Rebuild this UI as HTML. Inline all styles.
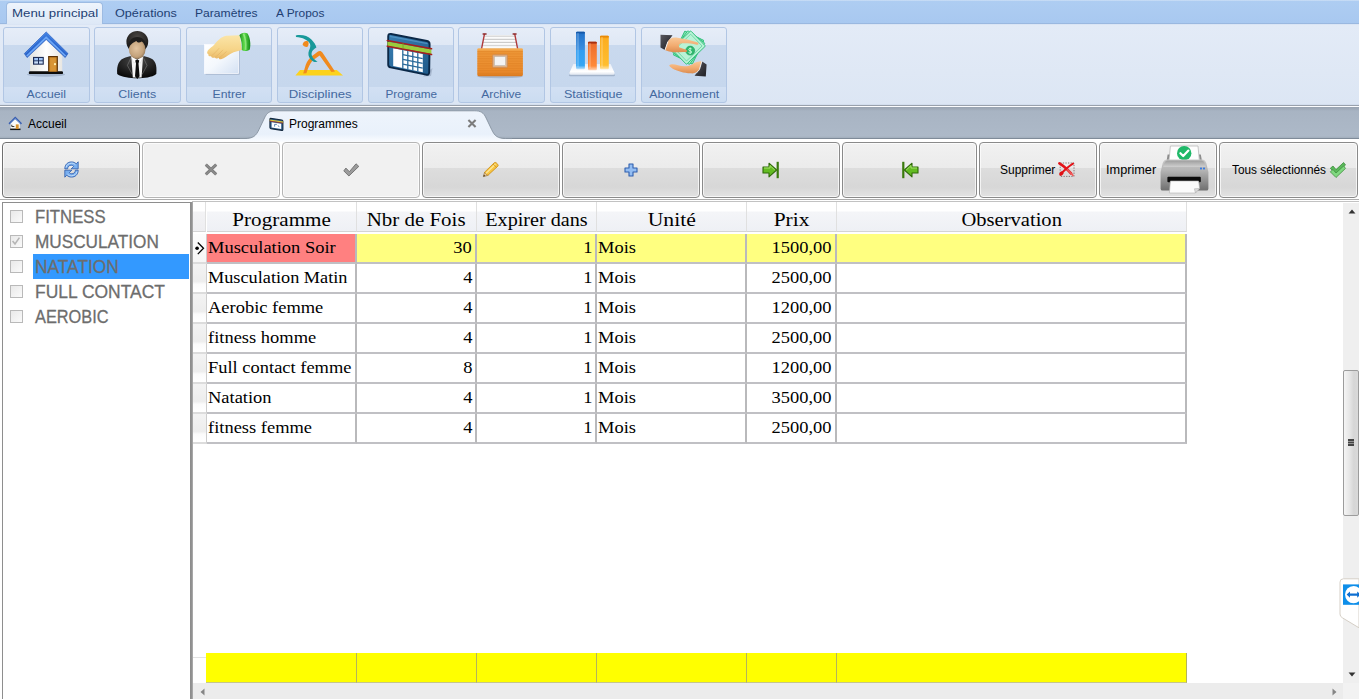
<!DOCTYPE html>
<html lang="fr">
<head>
<meta charset="utf-8">
<title>Programmes</title>
<style>
*{box-sizing:border-box;margin:0;padding:0}
html,body{width:1359px;height:699px;overflow:hidden;background:#fff}
body{position:relative;font-family:"Liberation Sans","DejaVu Sans",sans-serif;font-size:12px;color:#000}
.abs{position:absolute}
/* ---------- ribbon ---------- */
#tabstrip{left:0;top:0;width:1359px;height:24px;background:linear-gradient(#d5e4f7 0,#aecdf2 1.2px,#a8c8f0 100%)}
#ribbon{left:0;top:23px;width:1359px;height:82px;background:linear-gradient(#94b3dc 0,#9dbbe2 .8px,#e3ebf7 1.6px,#dfe8f5 60%,#dce6f4 100%)}
#ribline{left:0;top:104px;width:1359px;height:3px;background:linear-gradient(#d3deee 0,#d3deee .8px,#99a1ac 1px,#99a1ac 1.9px,#fbfcfe 2px)}
.rtab{top:0;height:24px;line-height:26px;font-size:11.2px;color:#1e3f73;white-space:nowrap;transform-origin:0 50%;transform:scaleX(1.13)}
#rtab-active{left:6px;top:2px;width:97px;height:22px;background:linear-gradient(#eef4fc,#dde8f6);border:1px solid #9dbbe2;border-bottom:none;border-radius:4px 4px 0 0}
.rbtn{top:27px;width:86.5px;height:76px;border:1px solid #b1c6e4;border-radius:3px;background:linear-gradient(#e6edf8 0,#dfe8f5 17px,#c9d9ee 17px,#c6d7ed 59px,#d2e0f3 59px,#cbdcf1 100%);overflow:hidden}
.rbtn .lbl{position:absolute;left:0;right:0;bottom:0;height:16px;line-height:17px;text-align:center;font-size:10.6px;color:#44699f;transform:scaleX(1.09)}
.rbtn svg.full{position:absolute;left:-1px;top:-1px;width:87px;height:76px}
/* ---------- doc tab bar ---------- */
#tabbar{left:0;top:107px;width:1359px;height:32px;background:linear-gradient(#98a3b1 0,#9faab8 2px,#a8b4c3 4px,#adb9c8 29px,#a4b0be 30.5px,#7f8b99 31.5px,#fff 32px)}
#tabgap{left:0;top:139px;width:1359px;height:65px;background:#fff}
.dtab{top:108px;height:31px;line-height:33px;font-size:12px;color:#000;white-space:nowrap}
/* ---------- toolbar ---------- */
.tb{top:142px;height:56px;border:1px solid #b5b5b5;border-radius:4px;background:linear-gradient(#f1f1f1 0,#ebebeb 25px,#dddddd 25px,#d7d7d7 44px,#e2e2e2 100%);box-shadow:inset 0 0 0 1px rgba(255,255,255,.7)}
.tb.flat{background:#f1f1f1}
.tb .t{position:absolute;top:0;height:54px;line-height:54px;font-size:12px;white-space:nowrap}
/* ---------- left list ---------- */
#left{left:2px;top:202px;width:191px;height:498px;border:1px solid #8e8e8e;border-right:none;background:#fff}
.li{-webkit-text-stroke:.3px #6d6d6d;left:34.5px;font-family:"Liberation Sans",sans-serif;font-size:19.1px;color:#6d6d6d;height:25px;line-height:25px;white-space:nowrap;transform-origin:0 50%;transform:scaleX(.85)}
.cb{left:10px;width:13px;height:13px;border:1px solid #b9b9b9;background:linear-gradient(135deg,#e9e9e9,#fafafa)}
/* ---------- grid ---------- */
.hd{top:202px;height:30px;line-height:35px;text-align:center;font-family:"Liberation Serif","DejaVu Serif",serif;font-size:18.7px;background:linear-gradient(#fff 0,#fff 9px,#f4f5f8 10px,#eef0f5 100%);border-right:1px solid #e0e0e0;border-bottom:1px solid #d4d4d4;white-space:nowrap}
.c{height:30px;line-height:27px;font-family:"Liberation Serif","DejaVu Serif",serif;font-size:16.8px;border-right:2px solid #b9b9bb;border-bottom:2px solid #c0c0c4;white-space:nowrap;overflow:hidden;padding:0 3px 0 1.4px;background:#fff}
.r{text-align:right}
.y{background:#ffff80}
.ft{top:653px;height:30px;background:#ffff00;border-right:1px solid #b4b45a;border-bottom:1px solid #c6c68a}
.sq,.sh,.sc{display:inline-block}
.sh{transform:scaleX(1.1)}
.sc{transform:scaleX(1.10);transform-origin:0 50%}
.r .sc{transform-origin:100% 50%}
</style>
</head>
<body>
<div id="tabstrip" class="abs"></div>
<div id="ribbon" class="abs"></div>
<div id="ribline" class="abs"></div>
<div id="rtab-active" class="abs"></div>
<div class="abs rtab" style="left:12px;transform:scaleX(1.184)">Menu principal</div>
<div class="abs rtab" style="left:115px;transform:scaleX(1.13)">Opérations</div>
<div class="abs rtab" style="left:195px;transform:scaleX(1.082)">Paramètres</div>
<div class="abs rtab" style="left:276px;transform:scaleX(1.068)">A Propos</div>
<svg width="0" height="0" style="position:absolute">
<defs>
<linearGradient id="gRoof" x1="0" y1="0" x2="0" y2="1"><stop offset="0" stop-color="#3f7fe2"/><stop offset=".5" stop-color="#2d69d0"/><stop offset="1" stop-color="#2a62c8"/></linearGradient>
<linearGradient id="gWall" x1="0" y1="0" x2="1" y2="0"><stop offset="0" stop-color="#e4e4e0"/><stop offset=".5" stop-color="#ffffff"/><stop offset="1" stop-color="#e9e7e2"/></linearGradient>
<radialGradient id="gFace" cx=".45" cy=".45" r=".6"><stop offset="0" stop-color="#e2c4a0"/><stop offset=".7" stop-color="#c4a37c"/><stop offset="1" stop-color="#8f7355"/></radialGradient>
<radialGradient id="gHair" cx=".5" cy=".3" r=".7"><stop offset="0" stop-color="#4a4744"/><stop offset="1" stop-color="#151413"/></radialGradient>
<radialGradient id="gSuit" cx=".5" cy=".25" r=".8"><stop offset="0" stop-color="#4b4b4b"/><stop offset=".6" stop-color="#1f1f1f"/><stop offset="1" stop-color="#050505"/></radialGradient>
<linearGradient id="gPaper" x1="0" y1="0" x2="1" y2="1"><stop offset="0" stop-color="#ffffff"/><stop offset=".5" stop-color="#f4f8fd"/><stop offset="1" stop-color="#d4e1f3"/></linearGradient>
<linearGradient id="gHand" x1="0" y1="0" x2="0" y2="1"><stop offset="0" stop-color="#fbe5a8"/><stop offset=".6" stop-color="#f6d488"/><stop offset="1" stop-color="#e9b765"/></linearGradient>
<linearGradient id="gCuff" x1="0" y1="0" x2="1" y2="0"><stop offset="0" stop-color="#1d8e1d"/><stop offset=".45" stop-color="#5fdc4c"/><stop offset="1" stop-color="#138a18"/></linearGradient>
</defs>
</svg>
<!-- Accueil -->
<div class="abs rbtn" style="left:3px"><svg viewBox="0 0 87 76" class="full">
<ellipse cx="43" cy="47.5" rx="19" ry="2.2" fill="#7d8fa8" opacity=".45"/>
<path d="M27.1 27 L43.2 11.4 L59.2 27 V45 H27.1Z" fill="url(#gWall)"/>
<rect x="25.8" y="44.2" width="34.2" height="2.9" rx="1.2" fill="#0c0c0c"/>
<rect x="30" y="29.9" width="10.8" height="7.8" fill="#1d2c55"/>
<rect x="31.2" y="31" width="3.8" height="2.4" fill="#9fc4f5"/><rect x="36" y="31" width="3.7" height="2.4" fill="#9fc4f5"/>
<rect x="31.2" y="34.3" width="3.8" height="2.3" fill="#c9defa"/><rect x="36" y="34.3" width="3.7" height="2.3" fill="#c9defa"/>
<rect x="45.1" y="29" width="9.8" height="15.8" fill="#5c3206"/>
<rect x="46.3" y="30.2" width="7.4" height="14.4" fill="#cf8a2a"/>
<rect x="47.3" y="31.2" width="5.4" height="12.4" fill="#dc9a3a" opacity=".7"/>
<circle cx="52" cy="37.2" r="1.1" fill="#fff0b0"/>
<path d="M21.3 26.6 L43.2 4.9 L65 26.6 L62.2 30.6 L43.2 12.6 L24.1 30.6Z" fill="url(#gRoof)" stroke="#2458b8" stroke-width=".6" stroke-linejoin="round"/>
<path d="M23.8 29 L43.2 10.4 L62.6 29" stroke="#6fa8f6" stroke-width="1.7" fill="none" stroke-linejoin="miter"/>
<path d="M22.4 26.4 L43.2 6 L64 26.4" stroke="#4d8ae6" stroke-width=".9" fill="none" opacity=".8"/>
</svg><div class="lbl" style="transform:scaleX(1.153)">Accueil</div></div>
<!-- Clients -->
<div class="abs rbtn" style="left:94.2px"><svg viewBox="0 0 87 76" class="full">
<path d="M23.2 47 C22.6 38 25 32.5 31.5 30.6 L38.5 28.4 H47.8 L54.8 30.6 C61.4 32.5 63.2 38 62.3 47 C58 50.5 50 51.2 43.2 51.2 C36 51.2 27.6 50.4 23.2 47Z" fill="url(#gSuit)"/>
<path d="M37.3 29.2 L43.2 33 L49 29.2 L47.6 50.6 H38.8Z" fill="#f4f4f4"/>
<path d="M36.8 29 L40 36.2 L43.2 33Z M49.5 29 L46.3 36.2 L43.2 33Z" fill="#ffffff" stroke="#cfcfcf" stroke-width=".4"/>
<path d="M41.2 33.6 L43.2 32.4 L45.3 33.6 L44.5 36.4 L45.6 49.3 L43.3 52 L41 49.3 L42 36.4Z" fill="#0b0b0b"/>
<path d="M37.2 30.4 L33.4 38.4 L38.4 47.6 M49.2 30.4 L53 38.4 L48 47.6" stroke="#8a8a8a" stroke-width=".9" fill="none" opacity=".55"/>
<ellipse cx="43.3" cy="14.8" rx="10.9" ry="10.9" fill="url(#gHair)"/>
<ellipse cx="43.2" cy="22.4" rx="8.3" ry="9.6" fill="url(#gFace)"/>
<path d="M34.7 22 C33.4 14.6 38 10 43.3 10 C48.6 10 53.2 14.6 51.9 22 C51.4 18 49.8 15.2 47.8 14.2 C45.8 16 43.8 16 42.4 14 C39.6 15.4 35.8 17 34.7 22Z" fill="#1f1e1d"/>
</svg><div class="lbl" style="transform:scaleX(1.168)">Clients</div></div>
<!-- Entrer -->
<div class="abs rbtn" style="left:185.8px"><svg viewBox="0 0 87 76" class="full">
<rect x="19.6" y="18.6" width="34" height="29" fill="#6f7f99" opacity=".45"/>
<rect x="18.5" y="17.4" width="34" height="29" fill="url(#gPaper)" stroke="#f9fbff" stroke-width=".8"/>
<path d="M21.4 24.4 C22 22.2 25.2 20.6 28.4 17.4 C31.8 13.6 35.2 9.6 40.2 8.8 L53.6 8.2 L55.8 22.8 C52 24.2 48.4 24.8 45.2 26.4 C41.6 28.4 38.6 31 35 32.2 C33.4 32.6 32.6 31.8 33 30.8 C31.6 31.6 29.6 31.8 29 30.4 C27.4 31 25.4 30.8 25.2 29.2 C23.6 29.6 21.8 28.8 22.4 27.2 C21.2 26.8 20.8 25.6 21.4 24.4Z" fill="url(#gHand)"/>
<path d="M25.2 29.2 C28 27 30.6 24.2 33.2 21.2 M29 30.4 C31.6 28.4 34.4 25.8 37 22.8 M33 30.8 C35.4 29.2 38 27 40.6 24.4" stroke="#e3b061" stroke-width=".7" fill="none" opacity=".8"/>
<path d="M53.4 8.2 C54.6 5.6 59.2 5 61.6 6.4 C64.2 10.4 65 17.4 63.8 22.4 C61.4 24.2 57.6 24.4 55.8 23 C56.2 18 55.4 12.6 53.4 8.2Z" fill="url(#gCuff)"/>
<path d="M57.4 6.6 C59.6 11.4 60.2 17.4 59.6 22.8" stroke="#b9f7a8" stroke-width="1.6" fill="none" opacity=".55"/>
</svg><div class="lbl" style="transform:scaleX(1.155)">Entrer</div></div>
<!-- Disciplines -->
<div class="abs rbtn" style="left:276.8px"><svg viewBox="0 0 87 76" class="full">
<path d="M23 43 H59.8 L66 48.6 H18.4Z" fill="#fcd21c"/>
<path d="M26.2 46.6 L27.8 41 C29 36.6 30.6 33.4 33.4 30.6 L36.2 32.8 C34 35.4 32.6 38 31 41.6 L29.4 46.2Z" fill="#f08a1e"/>
<path d="M34.4 29.4 L41 24.6 C42.6 23.6 44.4 24 45.4 25.6 L58 44.4 L54.4 45 L42.6 28.4 L37 32.6Z" fill="#f08a1e"/>
<path d="M18.8 8.4 C24.4 7.2 30.6 8.6 34.4 12.4 C37.2 15.2 39.2 18.4 39.4 20.6 C37.4 22 35.2 23.2 34.6 26 C34.2 29.2 36.6 32.4 40.6 34.6 C38.6 35.6 35.8 34.6 33.6 32.4 C31.4 30 30.8 26.6 32 23.6 C33 21.2 33.8 19.4 33 17 C31.4 13.2 25.4 10.2 19 10Z" fill="#18999a"/>
<path d="M25.6 17.6 C26 14.6 28.6 13 31.2 14.4 C32 16.4 31.6 18.6 30.2 20 C28.2 20.2 26.4 19.4 25.6 17.6Z" fill="#f08a1e"/>
</svg><div class="lbl" style="transform:scaleX(1.243)">Disciplines</div></div>
<!-- Programe -->
<div class="abs rbtn" style="left:367.6px"><svg viewBox="0 0 87 76" class="full">
<defs>
<linearGradient id="gCal" x1="0" y1="0" x2="1" y2="1"><stop offset="0" stop-color="#3a7fb2"/><stop offset="1" stop-color="#1f5a8a"/></linearGradient>
<clipPath id="cpCal"><path d="M25.2 21.3 L54.8 26.9 V45.3 L25.2 39.1Z"/></clipPath>
</defs>
<path d="M58 46 L64.5 41 L63 49 L55 49.5Z" fill="#6f7f99" opacity=".35"/>
<path d="M23 7 L59 14 Q61.6 14.6 61.6 17.2 L61.2 45.2 Q61 48.4 58 47.6 L22.6 40.4 Q20.2 39.8 20.2 37.4 L20.2 9.4 Q20.2 6.4 23 7Z" fill="url(#gCal)" stroke="#0b2847" stroke-width="1.9" stroke-linejoin="round"/>
<path d="M22 9.4 L59.6 16.6" stroke="#5a9ccc" stroke-width="1.4" opacity=".7"/>
<path d="M25.2 21.3 L54.8 26.9 V45.3 L25.2 39.1Z" fill="#ffffff"/>
<g clip-path="url(#cpCal)" stroke="#2a6a9a" stroke-width="1.3" fill="none">
<path d="M34.8 20 V46 M39.8 20 V46 M44.8 20 V46 M49.8 20 V46"/>
<path d="M34.8 27.6 L54.8 31.6 M34.8 32.4 L54.8 36.4 M34.8 37.2 L54.8 41.2"/>
</g>
<path d="M19.4 14.6 L63.4 22.6 L63.4 27 L19.4 18.8Z" fill="#9bcc3c"/>
<path d="M19.2 13.6 L63.6 21.8 M19.2 19.2 L63.6 27.6" stroke="#a8201c" stroke-width="1.5" stroke-linecap="round"/>
<path d="M35 16.4 V21.8" stroke="#7fa520" stroke-width=".9"/>
</svg><div class="lbl" style="transform:scaleX(1.108)">Programe</div></div>
<!-- Archive -->
<div class="abs rbtn" style="left:458.3px"><svg viewBox="0 0 87 76" class="full">
<defs>
<linearGradient id="gBox" x1="0" y1="0" x2="0" y2="1"><stop offset="0" stop-color="#f7b45e"/><stop offset=".12" stop-color="#ee9838"/><stop offset=".85" stop-color="#e98a2c"/><stop offset="1" stop-color="#d9781e"/></linearGradient>
<pattern id="pStr" width="4" height="2.4" patternUnits="userSpaceOnUse"><rect width="4" height="1.1" fill="#d9761a" opacity=".38"/></pattern>
<pattern id="pPap" width="4" height="3.2" patternUnits="userSpaceOnUse"><rect y="2.2" width="4" height="1" fill="#9a9a9a" opacity=".55"/></pattern>
</defs>
<ellipse cx="42" cy="49.6" rx="23" ry="1.6" fill="#6f7f99" opacity=".35"/>
<path d="M26.6 8 H56.6 L59.6 21.6 H23.6Z" fill="#fbfbfb"/>
<path d="M26.6 8 H56.6 L59.6 21.6 H23.6Z" fill="url(#pPap)"/>
<path d="M26.4 7.4 L23.6 21.6 M56.8 7.4 L59.6 21.6" stroke="#b03a3a" stroke-width="1.4" stroke-linecap="round"/>
<path d="M25.2 7 H28 M55.2 7 H58" stroke="#8e2a2a" stroke-width="1.6" stroke-linecap="round"/>
<rect x="19.3" y="21.2" width="45.6" height="28" rx="1.4" fill="url(#gBox)"/>
<rect x="19.3" y="23.6" width="45.6" height="24" fill="url(#pStr)"/>
<rect x="34.6" y="27.8" width="14.8" height="12.6" rx=".8" fill="#e2b58c" stroke="#c98c58" stroke-width=".8"/>
<rect x="36.4" y="29.6" width="11.2" height="9" fill="#f4f4f4" stroke="#b9b3ac" stroke-width=".6"/>
</svg><div class="lbl" style="transform:scaleX(1.137)">Archive</div></div>
<!-- Statistique -->
<div class="abs rbtn" style="left:549.5px"><svg viewBox="0 0 87 76" class="full">
<defs>
<linearGradient id="gBl" x1="0" y1="0" x2="0" y2="1"><stop offset="0" stop-color="#1f6fc8"/><stop offset=".48" stop-color="#3a8fe0"/><stop offset=".5" stop-color="#2f9df2"/><stop offset=".9" stop-color="#35a6f5"/><stop offset="1" stop-color="#bfe2fb"/></linearGradient>
<linearGradient id="gOr" x1="0" y1="0" x2="0" y2="1"><stop offset="0" stop-color="#c2411a"/><stop offset=".1" stop-color="#ee6e2c"/><stop offset=".85" stop-color="#ff8a3a"/><stop offset="1" stop-color="#ffd5b8"/></linearGradient>
<linearGradient id="gYe" x1="0" y1="0" x2="0" y2="1"><stop offset="0" stop-color="#f59a12"/><stop offset=".1" stop-color="#fcae20"/><stop offset=".88" stop-color="#ffbe30"/><stop offset="1" stop-color="#ffe6b0"/></linearGradient>
<linearGradient id="gBase" x1="0" y1="0" x2="0" y2="1"><stop offset="0" stop-color="#e9eef6"/><stop offset=".7" stop-color="#ffffff"/><stop offset="1" stop-color="#dfe5ee"/></linearGradient>
</defs>
<path d="M20 49.2 H64 Q66 48.6 64.6 47.6 H19.6 Q18 48.6 20 49.2Z" fill="#6f7f99" opacity=".4"/>
<path d="M23.4 37 H60.6 L64.4 45.4 Q64.8 47.8 62.4 47.8 H21.6 Q19.2 47.8 19.6 45.4Z" fill="url(#gBase)"/>
<rect x="26.1" y="4.8" width="8.8" height="37.4" rx="1" fill="url(#gBl)"/>
<rect x="26.1" y="4.8" width="8.8" height="1.8" rx=".9" fill="#1558a8"/>
<rect x="38" y="14.8" width="8.8" height="28.4" rx="1" fill="url(#gOr)"/>
<rect x="38" y="14.8" width="8.8" height="1.8" rx=".9" fill="#a8300f"/>
<rect x="50" y="8.8" width="8.8" height="33.4" rx="1" fill="url(#gYe)"/>
<rect x="50" y="8.8" width="8.8" height="1.8" rx=".9" fill="#e88a08"/>
<rect x="27" y="6" width="2" height="34" fill="#ffffff" opacity=".18"/><rect x="39" y="16" width="2" height="25" fill="#ffffff" opacity=".18"/><rect x="51" y="10" width="2" height="30" fill="#ffffff" opacity=".18"/>
</svg><div class="lbl" style="transform:scaleX(1.187)">Statistique</div></div>
<!-- Abonnement -->
<div class="abs rbtn" style="left:640.5px"><svg viewBox="0 0 87 76" class="full">
<defs>
<linearGradient id="gSk" x1="0" y1="0" x2="0" y2="1"><stop offset="0" stop-color="#f9c998"/><stop offset=".55" stop-color="#f2ab70"/><stop offset="1" stop-color="#dc8c50"/></linearGradient>
<linearGradient id="gSl" x1="0" y1="0" x2="1" y2="1"><stop offset="0" stop-color="#5a5a60"/><stop offset=".5" stop-color="#3a3a40"/><stop offset="1" stop-color="#1f1f24"/></linearGradient>
</defs>
<path d="M19.5 7.8 L31.5 8.2 L26.7 15 L23.9 23 L19.5 20.6Z" fill="url(#gSl)"/>
<path d="M60.8 34.3 L65.6 37.5 L64.8 49.5 L53.6 48.7 L58.4 42.3Z" fill="url(#gSl)"/>
<g transform="translate(47.6 20.6)" stroke-linejoin="round">
<g transform="rotate(-64)"><rect x="-13.2" y="-10.6" width="26.4" height="21.2" rx=".8" fill="#8fe6ba" stroke="#2fbf7a" stroke-width=".9"/></g>
<g transform="rotate(-54)"><rect x="-13.2" y="-10.6" width="26.4" height="21.2" rx=".8" fill="#a4ecc8" stroke="#2fbf7a" stroke-width=".9"/></g>
<g transform="rotate(-44)"><rect x="-13.2" y="-10.6" width="26.4" height="21.2" rx=".8" fill="#b9f2d6" stroke="#2fbf7a" stroke-width=".9"/><rect x="-10.8" y="-8.2" width="21.6" height="16.4" fill="none" stroke="#58d09a" stroke-width=".7"/></g>
</g>
<circle cx="49.2" cy="23.6" r="4.5" fill="#2fb86e" stroke="#1e9c58" stroke-width=".6"/>
<path d="M50.7 21.9 C49.5 21 47.7 21.3 47.7 22.6 C47.7 24.1 50.7 23.4 50.7 25 C50.7 26.3 48.7 26.5 47.5 25.5 M49.2 20.5 V26.9" stroke="#d8ffe8" stroke-width=".8" fill="none"/>
<path d="M23.9 23 L26.7 15 C28 11.6 31.4 10 35.4 10.6 C42.4 11.6 50.4 13.4 56.8 15.6 C58.2 16.6 57.4 18 55.8 17.7 C50 16.6 44 16 39.8 16.6 C37.8 17.2 37.4 19 38.4 20.4 C40.8 21.2 43.6 21.8 45.6 23 C46.6 24 45.8 25.3 44.4 25.1 C39.6 24.6 34.4 26 29.8 24.8 C27.4 24.4 25.4 23.8 23.9 23Z" fill="url(#gSk)"/>
<path d="M28.3 38.3 C30 36.6 33.4 37 37 38.2 C42 39.8 47 39.6 51 37.4 C54 35.4 57.4 34.4 60.8 34.3 L58.4 42.3 C56.8 45.2 53.6 46.8 49.6 46.3 C43 46 36 44 31.4 41.4 C29.6 40.4 28.2 39.4 28.3 38.3Z" fill="url(#gSk)"/>
<path d="M26.9 14.6 L24 23" stroke="#f6f6f6" stroke-width=".9" fill="none"/>
<path d="M61 34 L58.5 42.4 C57.6 44 56.6 45 55.4 45.8" stroke="#f6f6f6" stroke-width=".9" fill="none"/>
</svg><div class="lbl" style="transform:scaleX(1.164)">Abonnement</div></div>
<div id="tabbar" class="abs"></div>
<div id="tabgap" class="abs"></div>
<svg class="abs" style="left:240px;top:107px;width:272px;height:35px" viewBox="0 0 272 35">
<defs><linearGradient id="gTab" x1="0" y1="0" x2="0" y2="1"><stop offset="0" stop-color="#eef4fc"/><stop offset=".75" stop-color="#e9f1fb"/><stop offset="1" stop-color="#fbfdff"/></linearGradient></defs>
<path d="M0 31.5 H5 C13 31.5 16 29 19 22.5 L24.5 11 C27 5.5 30 3.8 36 3.8 H234.6 C240.6 3.8 243.6 5.5 246.1 11 L251.6 22.5 C254.6 29 257.6 31.5 265.6 31.5 H272 V35 H0Z" fill="url(#gTab)"/>
<path d="M0 31.5 H5 C13 31.5 16 29 19 22.5 L24.5 11 C27 5.5 30 3.8 36 3.8 H234.6 C240.6 3.8 243.6 5.5 246.1 11 L251.6 22.5 C254.6 29 257.6 31.5 265.6 31.5 H272" fill="none" stroke="#7d8997" stroke-width="1" opacity=".8"/>
</svg>
<!-- small home icon -->
<svg class="abs" style="left:8.4px;top:116.4px;width:14.5px;height:15.5px" viewBox="0 0 16 17">
<path d="M3 8 L8 3.4 L13 8 V14.4 H3Z" fill="#fbfbfa"/>
<rect x="2.4" y="13.8" width="11.4" height="1.7" fill="#151515"/>
<path d="M4.2 9.6 V11.6 H7" stroke="#222" stroke-width="1" fill="none"/>
<rect x="8.6" y="9.2" width="3.2" height="5" fill="#d9922c"/>
<path d="M1.2 8.6 L8 2 L14.8 8.6" stroke="#3a5fb0" stroke-width="2" fill="none" stroke-linejoin="miter"/>
<path d="M2.4 8.3 L8 2.9 L13.6 8.3" stroke="#9fc0f0" stroke-width=".7" fill="none"/>
</svg>
<div class="abs dtab" style="left:28px"><span class="sq">Accueil</span></div>
<!-- small calendar icon -->
<svg class="abs" style="left:269.4px;top:117.4px;width:15px;height:14.5px" viewBox="0 0 16 15">
<path d="M1.6 1.2 L13.6 3 Q14.8 3.2 14.8 4.4 V13 Q14.8 14.2 13.6 14 L2 12.2 Q1 12 1 11 V2 Q1 1.1 1.6 1.2Z" fill="#2f5f8f" stroke="#14293f" stroke-width="1.2"/>
<path d="M2.8 5.4 L13 7 V12.6 L2.8 11Z" fill="#ffffff"/>
<path d="M6 7.6 H8.4 M6 7.6 V10 M9.4 9 L11 10" stroke="#3d6fa3" stroke-width=".9"/>
<path d="M.8 3.1 L15 5.3" stroke="#d8c83a" stroke-width="1.3"/>
<path d="M.8 4.1 L15 6.3" stroke="#b0281c" stroke-width=".7"/>
</svg>
<div class="abs dtab" style="left:289px"><span class="sq">Programmes</span></div>
<svg class="abs" style="left:467px;top:119px;width:10px;height:9px" viewBox="0 0 10 9"><path d="M1.4 1 L8.6 8 M8.6 1 L1.4 8" stroke="#7c7c7c" stroke-width="2.1" stroke-linecap="butt"/></svg>
<div class="abs tb" style="left:2px;width:138px;border-color:#707070"></div>
<div class="abs tb flat" style="left:142px;width:138px"></div>
<div class="abs tb flat" style="left:282px;width:138px"></div>
<div class="abs tb" style="left:422px;width:138px;border-color:#8a8a8a"></div>
<div class="abs tb" style="left:562px;width:138px;border-color:#8a8a8a"></div>
<div class="abs tb" style="left:702px;width:138px;border-color:#8a8a8a"></div>
<div class="abs tb" style="left:842px;width:135px;border-color:#8a8a8a"></div>
<div class="abs tb" style="left:979px;width:118px;border-color:#8a8a8a"><div class="t" style="left:20px"><span class="sq">Supprimer</span></div></div>
<div class="abs tb" style="left:1099px;width:118px;border-color:#8a8a8a"><div class="t" style="left:6px"><span class="sq" style="transform:scaleX(1.06);transform-origin:0 50%">Imprimer</span></div></div>
<div class="abs tb" style="left:1219px;width:139px;border-color:#8a8a8a"><div class="t" style="left:12px"><span class="sq" style="transform:scaleX(.985);transform-origin:0 50%">Tous sélectionnés</span></div></div>
<!-- refresh -->
<svg class="abs" style="left:63.5px;top:161px;width:15px;height:17px" viewBox="0 0 15 17">
<g id="rfa"><path d="M.8 7.8 C.8 3.4 4 .9 7.4 .9 C9.4 .9 11 1.6 12.2 2.8 L14.2 .8 V7.8 H7.2 L9.6 5.4 C9 4.6 8.2 4.2 7.2 4.2 C5.2 4.2 3.8 5.6 3.6 7.8Z" fill="#78aeef" stroke="#2a58a8" stroke-width=".8" stroke-linejoin="round"/>
<path d="M2 6.4 C2.6 3.8 4.8 2.2 7.4 2.2 C9 2.2 10.4 2.8 11.4 3.8" stroke="#c9e2fb" stroke-width="1" fill="none"/></g>
<use href="#rfa" transform="rotate(180 7.5 8.5)"/>
</svg>
<!-- x -->
<svg class="abs" style="left:204px;top:163px;width:14px;height:13px" viewBox="0 0 14 13"><path d="M1.8 1.6 L12.2 11.4 M12.2 1.6 L1.8 11.4" stroke="#7a7a7a" stroke-width="3" stroke-linecap="butt"/><path d="M1.8 1.6 L12.2 11.4 M12.2 1.6 L1.8 11.4" stroke="#8c8c8c" stroke-width="1.4" stroke-linecap="butt"/></svg>
<!-- check -->
<svg class="abs" style="left:343px;top:163px;width:17px;height:14px" viewBox="0 0 17 14"><path d="M.8 7.9 L2.9 5.1 L6.4 8.7 L13 .8 L15.8 3.4 L5.9 13Z" fill="#9c9c9c" stroke="#6e6e6e" stroke-width=".9" stroke-linejoin="round"/></svg>
<!-- pencil -->
<svg class="abs" style="left:482px;top:161px;width:18px;height:17px" viewBox="0 0 18 17">
<path d="M1.4 15.6 L2.6 11.2 L5.8 14.4Z" fill="#e9c9a0" stroke="#7a5a20" stroke-width=".6"/>
<path d="M1.4 15.6 L1.9 13.8 L3.2 15.1Z" fill="#3a2a10"/>
<path d="M2.6 11.2 L12.2 1.8 Q13.2 1 14.2 1.8 L15.8 3.4 Q16.6 4.4 15.8 5.2 L5.8 14.4Z" fill="#f7c543" stroke="#c98a14" stroke-width=".8"/>
<path d="M4 12.4 L13.4 3.2" stroke="#fde9a0" stroke-width="1.2"/>
<path d="M11 3 L14.6 6.4" stroke="#c98a14" stroke-width=".7"/>
</svg>
<!-- plus -->
<svg class="abs" style="left:624px;top:163px;width:14px;height:14px" viewBox="0 0 14 14"><path d="M5 1 H9 V5 H13 V9 H9 V13 H5 V9 H1 V5 H5Z" fill="#93bdf2" stroke="#2f5fae" stroke-width="1.1" stroke-linejoin="round"/></svg>
<!-- arrow right to bar -->
<svg class="abs" style="left:762px;top:161px;width:18px;height:18px" viewBox="0 0 18 18">
<path d="M1 6 H7 V2.2 L14.6 9 L7 15.8 V12 H1Z" fill="#63bb22" stroke="#2f6a08" stroke-width="1.1" stroke-linejoin="round"/>
<path d="M2 7 H8 V4.6 L12.8 9" stroke="#a6e36a" stroke-width="1" fill="none"/>
<rect x="14.6" y=".8" width="2.2" height="16.4" fill="#3a7a0c"/>
</svg>
<!-- arrow left to bar -->
<svg class="abs" style="left:901px;top:161px;width:18px;height:18px" viewBox="0 0 18 18">
<path d="M17 6 H11 V2.2 L3.4 9 L11 15.8 V12 H17Z" fill="#63bb22" stroke="#2f6a08" stroke-width="1.1" stroke-linejoin="round"/>
<path d="M16 7 H10 V4.6 L5.2 9" stroke="#a6e36a" stroke-width="1" fill="none"/>
<rect x="1.2" y=".8" width="2.2" height="16.4" fill="#3a7a0c"/>
</svg>
<!-- red x with dotted box -->
<svg class="abs" style="left:1058px;top:162px;width:17px;height:15px" viewBox="0 0 17 15">
<rect x="2.2" y="1" width="13.8" height="13.4" fill="none" stroke="#7a6a6a" stroke-width=".9" stroke-dasharray="1.3 1.3"/>
<path d="M1.4 1.4 C5 3.4 9 7 13 11.4" stroke="#e31318" stroke-width="2.6" fill="none" stroke-linecap="round"/>
<path d="M9 7 L15 13.4" stroke="#ee5a5a" stroke-width="1.6" fill="none" stroke-linecap="round"/>
<path d="M15 1.6 C10.6 4.2 6 8.6 2.6 12.2" stroke="#e31318" stroke-width="2" fill="none" stroke-linecap="round"/>
<ellipse cx="3.4" cy="11.6" rx="2.4" ry="1.8" transform="rotate(-45 3.4 11.6)" fill="#e01015"/>
</svg>
<!-- printer -->
<svg class="abs" style="left:1160px;top:145px;width:49px;height:49px" viewBox="0 0 49 49">
<defs>
<linearGradient id="gPr" x1="0" y1="0" x2="0" y2="1"><stop offset="0" stop-color="#c9c9c9"/><stop offset=".35" stop-color="#b4b4b4"/><stop offset=".7" stop-color="#8e8e8e"/><stop offset="1" stop-color="#6f6f6f"/></linearGradient>
<linearGradient id="gPrT" x1="0" y1="0" x2="0" y2="1"><stop offset="0" stop-color="#9a9a9a"/><stop offset="1" stop-color="#d2d2d2"/></linearGradient>
</defs>
<path d="M10.4 1 H38 L39.4 16 H9Z" fill="#fdfdfd" stroke="#b9b9b9" stroke-width=".8"/>
<path d="M7.6 9.6 L9.4 9.6 L8.6 16 H6.6Z M40.8 9.6 L39 9.6 L40 16 H42Z" fill="#8c8c8c"/>
<circle cx="24.2" cy="8.2" r="7.2" fill="#1fb868"/>
<path d="M20.4 8.2 L23.2 11 L28.4 5.6" stroke="#ffffff" stroke-width="2.2" fill="none" stroke-linecap="round" stroke-linejoin="round"/>
<path d="M6.4 14.6 H42.6 Q45.4 15 46.4 18.6 L48.4 27 V43.4 Q48.4 45.6 46.4 45.6 H2.6 Q.6 45.6 .6 43.4 V27 L2.6 18.6 Q3.6 15 6.4 14.6Z" fill="url(#gPr)"/>
<path d="M7 15.6 H42 Q44 16 44.8 18.4 L45.8 22 H3.2 L4.2 18.4 Q5 16 7 15.6Z" fill="url(#gPrT)" opacity=".9"/>
<rect x="40" y="22.6" width="2" height="1.8" fill="#3a7be0"/><rect x="43" y="22.6" width="2" height="1.8" fill="#3a7be0"/>
<rect x="7.4" y="31.8" width="33.4" height="5.4" rx="1" fill="#0a0a0a"/>
<path d="M10.4 36 H38.6 L39.6 43.4 L35.4 48 H9.4Z" fill="#fbfbfb" stroke="#b4b4b4" stroke-width=".6"/>
<path d="M39.6 43.4 L34.4 43.8 L35.4 48Z" fill="#d9d9d9" stroke="#a8a8a8" stroke-width=".5"/>
</svg>
<!-- double check -->
<svg class="abs" style="left:1329px;top:161px;width:18px;height:18px" viewBox="0 0 18 18">
<path d="M1.3 7.3 L4 5 L7 8.6 L14.6 1.5 L16.5 4 L7 13Z" fill="#5ab85a" stroke="#3f8f3f" stroke-width=".8" stroke-linejoin="round"/>
<path d="M1.3 10.8 L4 8.5 L7 12 L14.6 5 L16.5 7.4 L7 16.5Z" fill="#80d880" stroke="#3f8f3f" stroke-width=".8" stroke-linejoin="round"/>
</svg>
<div id="left" class="abs"></div>
<div class="abs" style="left:190px;top:202px;width:3px;height:497px;background:linear-gradient(90deg,#8b8b8b,#929292 50%,#b2b2b2)"></div>
<div class="abs" style="left:33px;top:254px;width:156.4px;height:24.8px;background:#3399ff"></div>
<div class="abs cb" style="top:210px"></div><div class="abs li" style="top:204px;transform:scaleX(.876)">FITNESS</div>
<div class="abs cb" style="top:235px"></div><svg class="abs" style="left:11px;top:236px;width:10px;height:10px" viewBox="0 0 10 10"><path d="M1.6 5 L4 8 L8.4 1.6" stroke="#b5b5b5" stroke-width="1.6" fill="none"/></svg><div class="abs li" style="top:229px;transform:scaleX(0.9)">MUSCULATION</div>
<div class="abs cb" style="top:260px"></div><div class="abs li" style="top:254px;transform:scaleX(.908)">NATATION</div>
<div class="abs cb" style="top:285px"></div><div class="abs li" style="top:279px;transform:scaleX(.914)">FULL CONTACT</div>
<div class="abs cb" style="top:310px"></div><div class="abs li" style="top:304px;transform:scaleX(0.856)">AEROBIC</div>

<div class="abs" style="left:0;top:199px;width:1359px;height:1px;background:#adadad"></div>
<div class="abs" style="left:192px;top:201px;width:1167px;height:1px;background:#c2c2c2"></div>
<div class="abs" style="left:193px;top:202px;width:13px;height:30px;background:linear-gradient(#fff 0,#fff 9px,#f3f3f5 10px,#eeeef1 100%);border-right:1px solid #e0e0e0;border-bottom:1px solid #d4d4d4"></div>
<div class="abs hd" style="left:207px;width:150px"><span class="sh" style="transform:scaleX(1.13)">Programme</span></div>
<div class="abs hd" style="left:357px;width:120px"><span class="sh" style="transform:scaleX(1.12)">Nbr de Fois</span></div>
<div class="abs hd" style="left:477px;width:120px"><span class="sh" style="transform:scaleX(1.079)">Expirer dans</span></div>
<div class="abs hd" style="left:597px;width:150px"><span class="sh" style="transform:scaleX(1.16)">Unité</span></div>
<div class="abs hd" style="left:747px;width:90px"><span class="sh" style="transform:scaleX(1.15)">Prix</span></div>
<div class="abs hd" style="left:837px;width:350px"><span class="sh" style="transform:scaleX(1.1)">Observation</span></div>
<div class="abs" style="left:193px;top:234px;width:14px;height:30px;background:linear-gradient(#fcfcfc,#f6f6f6);border-right:1px solid #cdcdcd;border-bottom:2px solid #dcdcdc"></div><div class="abs c  y" style="left:207px;top:234px;width:150px;background:#ff8080;"><span class="sc">Musculation Soir</span></div><div class="abs c r y" style="left:357px;top:234px;width:120px;"><span class="sc">30</span></div><div class="abs c r y" style="left:477px;top:234px;width:120px;"><span class="sc">1</span></div><div class="abs c  y" style="left:597px;top:234px;width:150px;"><span class="sc">Mois</span></div><div class="abs c r y" style="left:747px;top:234px;width:90px;"><span class="sc">1500,00</span></div><div class="abs c  y" style="left:837px;top:234px;width:350px;"><span class="sc"></span></div>
<div class="abs" style="left:193px;top:264px;width:14px;height:30px;background:linear-gradient(#f3f3f3 0,#ededed 62%,#fbfbfb 72%,#fff 100%);border-right:1px solid #cdcdcd;border-bottom:2px solid #dcdcdc"></div><div class="abs c" style="left:207px;top:264px;width:150px;"><span class="sc" style="transform:scaleX(1.088)">Musculation Matin</span></div><div class="abs c r" style="left:357px;top:264px;width:120px;"><span class="sc">4</span></div><div class="abs c r" style="left:477px;top:264px;width:120px;"><span class="sc">1</span></div><div class="abs c" style="left:597px;top:264px;width:150px;"><span class="sc">Mois</span></div><div class="abs c r" style="left:747px;top:264px;width:90px;"><span class="sc">2500,00</span></div><div class="abs c" style="left:837px;top:264px;width:350px;"><span class="sc"></span></div>
<div class="abs" style="left:193px;top:294px;width:14px;height:30px;background:linear-gradient(#f3f3f3 0,#ededed 62%,#fbfbfb 72%,#fff 100%);border-right:1px solid #cdcdcd;border-bottom:2px solid #dcdcdc"></div><div class="abs c" style="left:207px;top:294px;width:150px;"><span class="sc">Aerobic femme</span></div><div class="abs c r" style="left:357px;top:294px;width:120px;"><span class="sc">4</span></div><div class="abs c r" style="left:477px;top:294px;width:120px;"><span class="sc">1</span></div><div class="abs c" style="left:597px;top:294px;width:150px;"><span class="sc">Mois</span></div><div class="abs c r" style="left:747px;top:294px;width:90px;"><span class="sc">1200,00</span></div><div class="abs c" style="left:837px;top:294px;width:350px;"><span class="sc"></span></div>
<div class="abs" style="left:193px;top:324px;width:14px;height:30px;background:linear-gradient(#f3f3f3 0,#ededed 62%,#fbfbfb 72%,#fff 100%);border-right:1px solid #cdcdcd;border-bottom:2px solid #dcdcdc"></div><div class="abs c" style="left:207px;top:324px;width:150px;"><span class="sc">fitness homme</span></div><div class="abs c r" style="left:357px;top:324px;width:120px;"><span class="sc">4</span></div><div class="abs c r" style="left:477px;top:324px;width:120px;"><span class="sc">1</span></div><div class="abs c" style="left:597px;top:324px;width:150px;"><span class="sc">Mois</span></div><div class="abs c r" style="left:747px;top:324px;width:90px;"><span class="sc">2500,00</span></div><div class="abs c" style="left:837px;top:324px;width:350px;"><span class="sc"></span></div>
<div class="abs" style="left:193px;top:354px;width:14px;height:30px;background:linear-gradient(#f3f3f3 0,#ededed 62%,#fbfbfb 72%,#fff 100%);border-right:1px solid #cdcdcd;border-bottom:2px solid #dcdcdc"></div><div class="abs c" style="left:207px;top:354px;width:150px;"><span class="sc">Full contact femme</span></div><div class="abs c r" style="left:357px;top:354px;width:120px;"><span class="sc">8</span></div><div class="abs c r" style="left:477px;top:354px;width:120px;"><span class="sc">1</span></div><div class="abs c" style="left:597px;top:354px;width:150px;"><span class="sc">Mois</span></div><div class="abs c r" style="left:747px;top:354px;width:90px;"><span class="sc">1200,00</span></div><div class="abs c" style="left:837px;top:354px;width:350px;"><span class="sc"></span></div>
<div class="abs" style="left:193px;top:384px;width:14px;height:30px;background:linear-gradient(#f3f3f3 0,#ededed 62%,#fbfbfb 72%,#fff 100%);border-right:1px solid #cdcdcd;border-bottom:2px solid #dcdcdc"></div><div class="abs c" style="left:207px;top:384px;width:150px;"><span class="sc">Natation</span></div><div class="abs c r" style="left:357px;top:384px;width:120px;"><span class="sc">4</span></div><div class="abs c r" style="left:477px;top:384px;width:120px;"><span class="sc">1</span></div><div class="abs c" style="left:597px;top:384px;width:150px;"><span class="sc">Mois</span></div><div class="abs c r" style="left:747px;top:384px;width:90px;"><span class="sc">3500,00</span></div><div class="abs c" style="left:837px;top:384px;width:350px;"><span class="sc"></span></div>
<div class="abs" style="left:193px;top:414px;width:14px;height:30px;background:linear-gradient(#f3f3f3 0,#ededed 62%,#fbfbfb 72%,#fff 100%);border-right:1px solid #cdcdcd;border-bottom:2px solid #dcdcdc"></div><div class="abs c" style="left:207px;top:414px;width:150px;"><span class="sc">fitness femme</span></div><div class="abs c r" style="left:357px;top:414px;width:120px;"><span class="sc">4</span></div><div class="abs c r" style="left:477px;top:414px;width:120px;"><span class="sc">1</span></div><div class="abs c" style="left:597px;top:414px;width:150px;"><span class="sc">Mois</span></div><div class="abs c r" style="left:747px;top:414px;width:90px;"><span class="sc">2500,00</span></div><div class="abs c" style="left:837px;top:414px;width:350px;"><span class="sc"></span></div>
<svg class="abs" style="left:195px;top:242px;width:11px;height:13px" viewBox="0 0 11 13"><circle cx="2.1" cy="6.2" r="1.8" fill="#000"/><path d="M2.8 .5 L8.5 6.3 L2.8 12.1" stroke="#000" stroke-width="1.3" fill="none"/></svg>
<div class="abs ft" style="left:206px;width:151px"></div><div class="abs ft" style="left:357px;width:120px"></div><div class="abs ft" style="left:477px;width:120px"></div><div class="abs ft" style="left:597px;width:150px"></div><div class="abs ft" style="left:747px;width:90px"></div><div class="abs ft" style="left:837px;width:350px"></div>
<div class="abs" style="left:193px;top:657px;width:13px;height:1px;background:#e3e3e3"></div>
<div class="abs" style="left:193px;top:683px;width:1166px;height:16px;background:#ececec"></div>
<div class="abs" style="left:1343px;top:203px;width:16px;height:480px;background:#efefef"></div>
<div class="abs" style="left:1343px;top:683px;width:16px;height:16px;background:#f2f2f2"></div>
<svg class="abs" style="left:199.5px;top:687.5px;width:5px;height:8px" viewBox="0 0 6 9"><path d="M5.4 .4 V8.6 L.6 4.5Z" fill="#858585"/></svg>
<svg class="abs" style="left:1331.5px;top:687.5px;width:5px;height:8px" viewBox="0 0 6 9"><path d="M.6 .4 V8.6 L5.4 4.5Z" fill="#858585"/></svg>
<svg class="abs" style="left:1347.6px;top:209.4px;width:8px;height:5px" viewBox="0 0 9 6"><path d="M.4 5.4 H8.6 L4.5 .6Z" fill="#333"/></svg>
<svg class="abs" style="left:1347.6px;top:672px;width:8px;height:5px" viewBox="0 0 9 6"><path d="M.4 .6 H8.6 L4.5 5.4Z" fill="#333"/></svg>
<div class="abs" style="left:1343px;top:370px;width:16px;height:146px;border:1px solid #9c9c9c;border-radius:2px;background:linear-gradient(90deg,#f5f5f5,#e6e6e6 40%,#d6d6d6 70%,#d9d9d9)"></div>
<div class="abs" style="left:1347.5px;top:439.3px;width:6px;height:1.3px;background:#444;box-shadow:0 2.5px 0 #444,0 5px 0 #444"></div>
<svg class="abs" style="left:1338px;top:577.5px;width:21px;height:54px" viewBox="0 0 21 54">
<path d="M21 .8 H5.4 Q2 .8 2 4.2 V36 Q2 38.6 4.4 39.8 L21 49.8Z" fill="#ffffff" stroke="#d5cfc6" stroke-width="1"/>
<rect x="5" y="6.4" width="16" height="20.4" fill="#0e8ee9"/>
<circle cx="15.6" cy="16.6" r="8.6" fill="#ffffff"/>
<path d="M8.6 16.6 L12 13.4 V15.4 H19.2 V13.4 L22.6 16.6 L19.2 19.8 V17.8 H12 V19.8Z" fill="#0e6fd1"/>
</svg>

</body>
</html>
